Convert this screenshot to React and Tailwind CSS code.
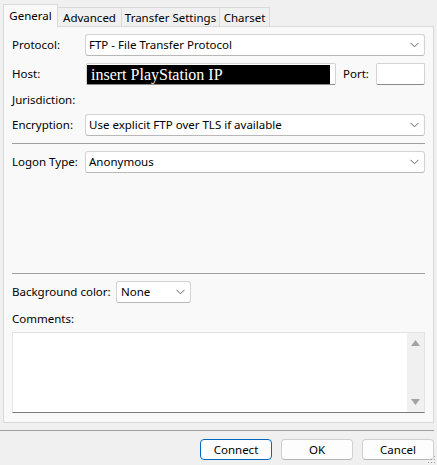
import React from "react";

const font = { fontFamily: '"Noto Sans", "Open Sans", sans-serif' };

function Chevron() {
  return (
    <svg width="9" height="6" viewBox="0 0 9 6" className="shrink-0">
      <path d="M0.5 0.8 L4.5 4.8 L8.5 0.8" fill="none" stroke="#606060" strokeWidth="1" />
    </svg>
  );
}

function Combo({ text, className = "" }) {
  return (
    <div
      className={
        "h-[22px] flex items-center justify-between bg-white border border-[#d3d3d3] border-b-[#b8b8b8] rounded-[3px] pl-[3px] pr-[5px] " +
        className
      }
    >
      <span className="text-[11.5px] leading-none text-black">{text}</span>
      <Chevron />
    </div>
  );
}

function Label({ children, className = "" }) {
  return (
    <div className={"w-[73px] shrink-0 text-[11.5px] leading-none text-black " + className}>{children}</div>
  );
}

function Tab({ children, selected, className = "" }) {
  if (selected) {
    return (
      <div
        className={
          "relative z-10 h-[23px] -mb-px flex items-start pt-[5px] justify-center bg-[#f9f9f9] border-l border-t border-r border-[#d9d9d9] text-[11.5px] leading-none text-black " +
          className
        }
      >
        {children}
      </div>
    );
  }
  return (
    <div
      className={
        "h-[19px] -ml-px flex items-center justify-center bg-[#f0f0f0] border-l border-t border-r border-[#d9d9d9] text-[11.5px] leading-none text-black " +
        className
      }
    >
      {children}
    </div>
  );
}

function Button({ children, primary }) {
  return (
    <div
      className={
        "w-[72px] h-[21px] flex items-center justify-center rounded-[4px] bg-[#fdfdfd] text-[11.5px] leading-none text-black border " +
        (primary ? "border-[#0067c0]" : "border-[#d0d0d0] border-b-[#b5b5b5]")
      }
    >
      {children}
    </div>
  );
}

export default function App() {
  return (
    <div className="relative w-[437px] h-[465px] bg-[#f0f0f0] overflow-hidden" style={font}>
      {/* Tabs */}
      <div className="flex items-end ml-[3px] mt-[4px]">
        <Tab selected className="w-[55px]">General</Tab>
        <Tab className="w-[65px] pt-px">Advanced</Tab>
        <Tab className="w-[99px] pt-px">Transfer Settings</Tab>
        <Tab className="w-[51px] pt-px">Charset</Tab>
      </div>

      {/* Panel */}
      <div className="ml-[3px] w-[431px] h-[397px] border border-[#d9d9d9] bg-[#f9f9f9] pl-[8px] pr-[8px] pt-[7px] flex flex-col">
        <div className="flex items-center h-[22px]">
          <Label>Protocol:</Label>
          <Combo text="FTP - File Transfer Protocol" className="flex-1" />
        </div>

        <div className="flex items-center h-[22px] mt-[7px]">
          <Label>Host:</Label>
          <div className="ml-px w-[250px] h-[22px] bg-white border border-[#d3d3d3] border-b-[#8a8a8a] rounded-[2px] pt-px">
            <div
              className="w-[243px] h-[19px] bg-black text-white text-[16px] leading-[19px] pl-[4px]"
              style={{ fontFamily: '"Liberation Serif", "Times New Roman", serif' }}
            >
              insert PlayStation IP
            </div>
          </div>
          <div className="ml-[7px] text-[11.5px] leading-none text-black">Port:</div>
          <div className="ml-auto w-[49px] h-[22px] bg-white border border-[#d3d3d3] border-b-[#8a8a8a] rounded-[2px]" />
        </div>

        <div className="flex items-center h-[15px] mt-[7px]">
          <Label>Jurisdiction:</Label>
        </div>

        <div className="flex items-center h-[22px] mt-[7px]">
          <Label>Encryption:</Label>
          <Combo text="Use explicit FTP over TLS if available" className="flex-1" />
        </div>

        <div className="h-px bg-[#a0a0a0] mt-[7px]" />

        <div className="flex items-center h-[22px] mt-[7px]">
          <Label>Logon Type:</Label>
          <Combo text="Anonymous" className="flex-1" />
        </div>

        <div className="h-px bg-[#a0a0a0] mt-[100px]" />

        <div className="flex items-center h-[22px] mt-[7px]">
          <div className="text-[11.5px] leading-none text-black w-[104px] shrink-0">Background color:</div>
          <Combo text="None" className="w-[75px] pl-[4px]" />
        </div>

        <div className="h-[15px] mt-[8px] flex items-center text-[11.5px] leading-none text-black">Comments:</div>

        <div className="mt-[6px] h-[81px] bg-white border border-[#e3e3e3] border-b-[#7a7a7a] flex justify-end">
          <div className="w-[17px] h-full bg-[#f0f0f0] flex flex-col items-center justify-between py-[7px]">
            <svg width="9" height="6" viewBox="0 0 9 6">
              <path d="M0 6 L4.5 0 L9 6 Z" fill="#a3a3a3" />
            </svg>
            <svg width="9" height="6" viewBox="0 0 9 6">
              <path d="M0 0 L4.5 6 L9 0 Z" fill="#a3a3a3" />
            </svg>
          </div>
        </div>
      </div>

      {/* Bottom separator */}
      <div className="w-[434px] h-px bg-[#a0a0a0] mt-[7px]" />

      {/* Buttons */}
      <div className="flex justify-end gap-[9px] pr-[3px] mt-[8px]">
        <Button primary>Connect</Button>
        <Button>OK</Button>
        <Button>Cancel</Button>
      </div>

      {/* Size grip */}
      <svg className="absolute right-[1px] bottom-[1px]" width="9" height="9" viewBox="0 0 9 9">
        <rect x="7" y="1" width="1" height="1" fill="#a0a0a0" />
        <rect x="4" y="4" width="1" height="1" fill="#a0a0a0" />
        <rect x="7" y="4" width="1" height="1" fill="#a0a0a0" />
        <rect x="1" y="7" width="1" height="1" fill="#a0a0a0" />
        <rect x="4" y="7" width="1" height="1" fill="#a0a0a0" />
        <rect x="7" y="7" width="1" height="1" fill="#a0a0a0" />
      </svg>
    </div>
  );
}
